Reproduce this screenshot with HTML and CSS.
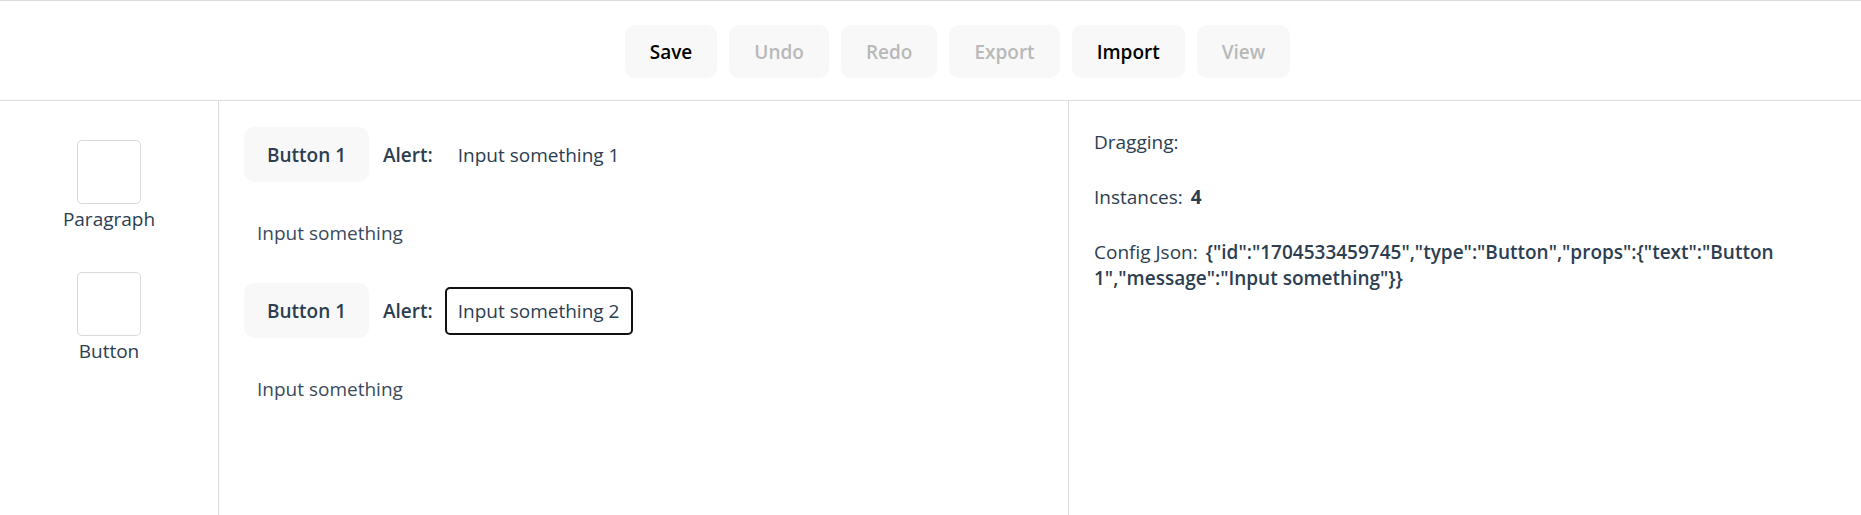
FILE: index.html
```html
<!DOCTYPE html>
<html lang="en">
<head>
<meta charset="utf-8">
<title>Editor</title>
<link rel="stylesheet" href="styles.css">
</head>
<body>
<div class="app">
  <header class="toolbar">
    <button class="tool-btn">Save</button>
    <button class="tool-btn is-disabled">Undo</button>
    <button class="tool-btn is-disabled">Redo</button>
    <button class="tool-btn is-disabled">Export</button>
    <button class="tool-btn">Import</button>
    <button class="tool-btn is-disabled">View</button>
  </header>
  <main class="workspace">
    <aside class="palette">
      <div class="palette-item">
        <div class="palette-box"></div>
        <div class="palette-label">Paragraph</div>
      </div>
      <div class="palette-item">
        <div class="palette-box"></div>
        <div class="palette-label">Button</div>
      </div>
    </aside>
    <section class="canvas">
      <div class="comp-row">
        <button class="comp-btn">Button 1</button>
        <span class="alert-label">Alert:</span>
        <div class="alert-input">Input something 1</div>
      </div>
      <div class="comp-para">Input something</div>
      <div class="comp-row">
        <button class="comp-btn">Button 1</button>
        <span class="alert-label">Alert:</span>
        <div class="alert-input is-focused">Input something 2</div>
      </div>
      <div class="comp-para">Input something</div>
    </section>
    <section class="inspector">
      <p class="info-row"><span class="info-label">Dragging:</span></p>
      <p class="info-row"><span class="info-label">Instances:</span><b class="info-count">4</b></p>
      <p class="info-row"><span class="info-label">Config Json:</span><b class="info-json">{"id":"1704533459745","type":"Button","props":{"text":"Button 1","message":"Input something"}}</b></p>
    </section>
  </main>
</div>
</body>
</html>
```

FILE: styles.css
```css
* {
  box-sizing: border-box;
}

html, body {
  margin: 0;
  padding: 0;
  background: #ffffff;
}

body {
  font-family: "Open Sans", "Noto Sans", sans-serif;
  font-size: 19px;
  line-height: 26px;
  color: #2c3e50;
}

.app {
  display: flex;
  flex-direction: column;
  height: 515px;
}

.toolbar {
  height: 101px;
  border-top: 1px solid #dcdcdc;
  border-bottom: 1px solid #dcdcdc;
  display: flex;
  justify-content: center;
  align-items: flex-start;
  gap: 12px;
  padding-top: 24px;
  padding-left: 54px;
}

.tool-btn {
  height: 53px;
  padding: 0 25px;
  border: none;
  border-radius: 10px;
  background: #f8f8f8;
  font-family: inherit;
  font-size: 19px;
  font-weight: 600;
  color: #000000;
}

.tool-btn.is-disabled {
  color: #b9b9b9;
}

.workspace {
  flex: 1;
  display: grid;
  grid-template-columns: 219px 850px 1fr;
}

.palette {
  border-right: 1px solid #dcdcdc;
  display: flex;
  flex-direction: column;
  align-items: center;
  gap: 40px;
  padding-top: 39px;
}

.palette-item {
  display: flex;
  flex-direction: column;
  align-items: center;
}

.palette-box {
  width: 64px;
  height: 64px;
  border: 1px solid #d9d9d9;
  border-radius: 5px;
}

.palette-label {
  margin-top: 2px;
}

.canvas {
  border-right: 1px solid #dcdcdc;
  padding: 26px 25px;
  display: flex;
  flex-direction: column;
  gap: 26px;
}

.comp-row {
  display: flex;
  align-items: center;
  height: 55px;
}

.comp-btn {
  height: 55px;
  width: 125px;
  padding: 0;
  border: none;
  border-radius: 10px;
  background: #f8f8f8;
  font-family: inherit;
  font-size: 19px;
  font-weight: 600;
  color: #2c3e50;
}

.alert-label {
  font-weight: 600;
  margin-left: 14px;
  margin-right: 12px;
}

.alert-input {
  height: 48px;
  width: 188px;
  border: 2px solid transparent;
  border-radius: 5px;
  padding: 0 11px;
  display: flex;
  align-items: center;
  white-space: nowrap;
}

.alert-input.is-focused {
  border-color: #111111;
}

.comp-para {
  height: 49px;
  padding: 0 13px;
  display: flex;
  align-items: center;
  color: #3a4a5c;
}

.inspector {
  padding: 28px 10px 0 25px;
  display: flex;
  flex-direction: column;
  gap: 29px;
}

.info-row {
  margin: 0;
}

.info-label {
  margin-right: 8px;
}

.info-count {
  font-weight: 700;
}

.info-json {
  font-weight: 600;
}
```
